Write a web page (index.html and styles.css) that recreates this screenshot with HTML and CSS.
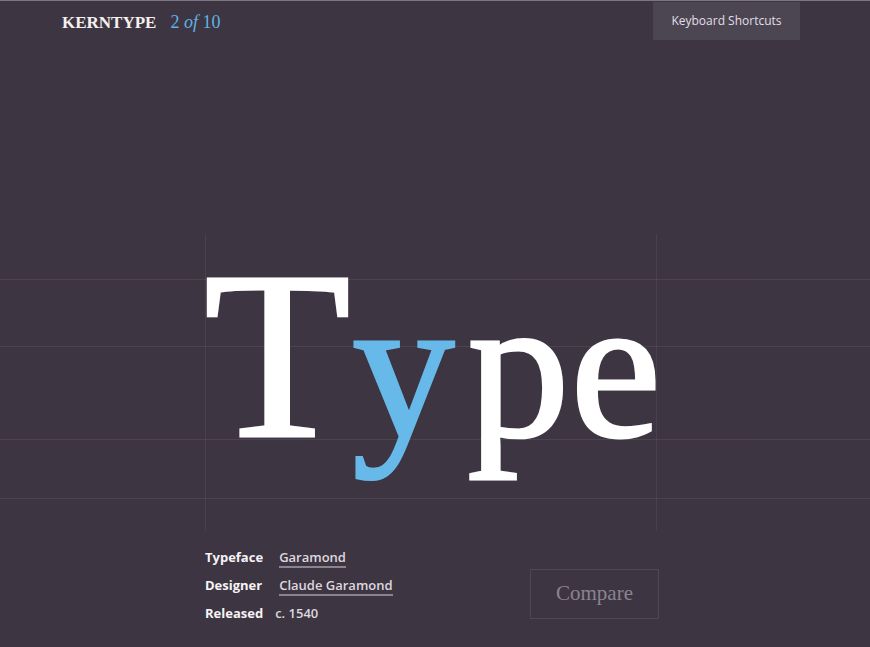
FILE: index.html
```html
<!DOCTYPE html>
<html lang="en">
<head>
<meta charset="utf-8">
<title>Kerntype</title>
<link rel="stylesheet" href="styles.css">
</head>
<body>
<header class="topbar">
  <div class="brand">
    <span class="logo">KERNTYPE</span>
    <span class="progress">2 <em>of</em> 10</span>
  </div>
  <button class="shortcuts">Keyboard Shortcuts</button>
</header>
<main>
  <section class="stage">
    <div class="word"><span class="cap">T</span><span class="lower active">y</span><span class="lower mid">p</span><span class="lower">e</span></div>
  </section>
  <section class="details">
    <dl class="info">
      <dt>Typeface</dt><dd><a href="#">Garamond</a></dd>
      <dt>Designer</dt><dd><a href="#">Claude Garamond</a></dd>
      <dt>Released</dt><dd class="plain">c. 1540</dd>
    </dl>
    <button class="compare">Compare</button>
  </section>
</main>
</body>
</html>
```
FILE: styles.css
```css
html, body {
  margin: 0;
  padding: 0;
}
body {
  background: #3e3542;
  width: 870px;
  height: 647px;
  overflow: hidden;
  border-top: 1px solid #7d7682;
  box-sizing: border-box;
  font-family: "Open Sans", "Liberation Sans", sans-serif;
}
.topbar {
  display: flex;
  justify-content: space-between;
  align-items: flex-start;
  padding: 1px 70px 0 62px;
  height: 39px;
}
.brand {
  display: flex;
  align-items: baseline;
  gap: 14px;
  padding-top: 10px;
}
.logo {
  font-family: "Liberation Serif", serif;
  font-weight: bold;
  font-size: 17px;
  color: #f4f1ee;
}
.progress {
  font-family: "Liberation Serif", serif;
  font-size: 18px;
  color: #5fb2e2;
}
.progress em {
  font-style: italic;
}
.shortcuts {
  width: 147px;
  height: 38px;
  border: 0;
  margin: 0;
  background: #4c4653;
  color: #e2dfe4;
  font-family: "Open Sans", "Liberation Sans", sans-serif;
  font-size: 12px;
  padding: 0 0 2px;
}
.stage {
  margin-top: 193px;
  height: 297px;
  background-image:
    linear-gradient(rgba(255,255,255,0.07), rgba(255,255,255,0.07)),
    linear-gradient(rgba(255,255,255,0.07), rgba(255,255,255,0.07)),
    linear-gradient(rgba(255,255,255,0.07), rgba(255,255,255,0.07)),
    linear-gradient(rgba(255,255,255,0.07), rgba(255,255,255,0.07));
  background-size: 100% 1px;
  background-repeat: no-repeat;
  background-position: 0 45px, 0 112px, 0 205px, 0 264px;
}
.word {
  margin-left: 205px;
  width: 452px;
  height: 297px;
  box-sizing: border-box;
  border-left: 1px solid rgba(255,255,255,0.06);
  border-right: 1px solid rgba(255,255,255,0.06);
  font-family: "Liberation Serif", serif;
  font-size: 240px;
  line-height: 1;
  padding-top: 1px;
  color: #ffffff;
  -webkit-text-stroke: 3px currentColor;
  white-space: nowrap;
  text-indent: -2px;
}
.word .lower {
  font-size: 204px;
}
.word .active {
  color: #66b9e8;
  margin-left: 2px;
  margin-right: 13px;
}
.word .mid {
  margin-right: 1px;
}
.details {
  display: flex;
  align-items: flex-start;
  padding-left: 205px;
  padding-top: 12px;
}
.info {
  display: grid;
  grid-template-columns: auto auto;
  column-gap: 12px;
  row-gap: 0;
  margin: 0;
  width: 325px;
  justify-content: start;
}
.info dt {
  font-weight: bold;
  font-size: 13px;
  line-height: 28px;
  color: #f5f3f5;
}
.info dd {
  margin: 0;
  font-size: 13px;
  line-height: 28px;
  font-weight: 600;
  color: #dcd8de;
}
.info a {
  color: #dcd8de;
  text-decoration: none;
  margin-left: 4px;
  border-bottom: 2px solid #8a8491;
  padding-bottom: 0;
}
.compare {
  margin-top: 26px;
  width: 129px;
  height: 50px;
  background: transparent;
  border: 1px solid rgba(255,255,255,0.09);
  color: #8b8391;
  font-family: "Liberation Serif", serif;
  font-size: 21px;
  padding: 0 0 2px;
}
```
